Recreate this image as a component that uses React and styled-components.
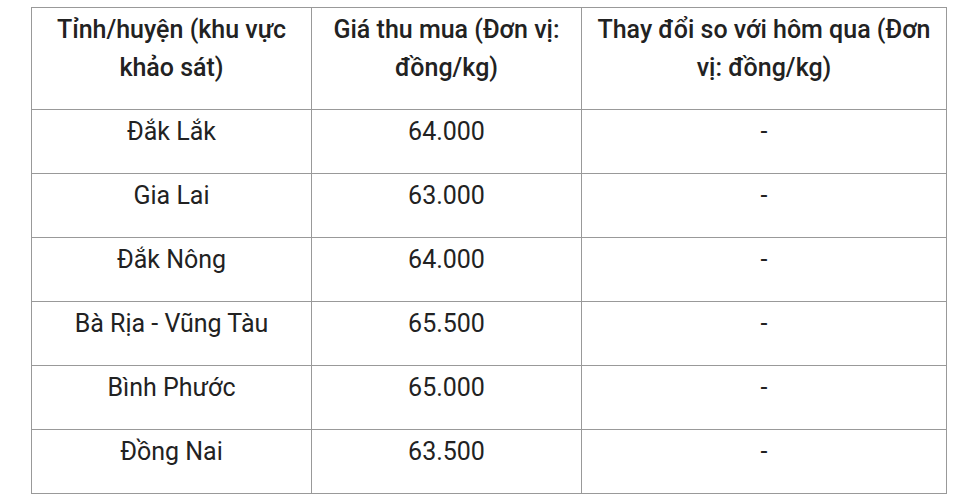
import React from "react";
import styled, { createGlobalStyle } from "styled-components";

const GlobalStyle = createGlobalStyle`
  body {
    margin: 0;
    background: #fff;
    font-family: Roboto, "Noto Sans", "Liberation Sans", sans-serif;
    color: #222;
  }
`;

const Wrapper = styled.div`
  padding: 7px 28px 0 31px;
`;

const Table = styled.table`
  width: 915px;
  border-collapse: collapse;
  table-layout: fixed;
  font-size: 25px;
  line-height: 38px;
`;

const Col = styled.col`
  width: ${(p) => p.$w}px;
`;

const HeadCell = styled.th`
  border: 1px solid #999;
  padding: 3px 8px 22px;
  font-weight: 500;
  text-align: center;
  vertical-align: top;
  height: 76px;
`;

const Cell = styled.td`
  border: 1px solid #999;
  padding: 3px 8px 22px;
  text-align: center;
  vertical-align: top;
  height: 38px;
`;

const rows = [
  ["Đắk Lắk", "64.000", "-"],
  ["Gia Lai", "63.000", "-"],
  ["Đắk Nông", "64.000", "-"],
  ["Bà Rịa - Vũng Tàu", "65.500", "-"],
  ["Bình Phước", "65.000", "-"],
  ["Đồng Nai", "63.500", "-"],
];

export default function App() {
  return (
    <>
      <GlobalStyle />
      <Wrapper>
        <Table>
          <colgroup>
            <Col $w={280} />
            <Col $w={270} />
            <Col $w={365} />
          </colgroup>
          <thead>
            <tr>
              <HeadCell>Tỉnh/huyện (khu vực khảo sát)</HeadCell>
              <HeadCell>Giá thu mua (Đơn vị: đồng/kg)</HeadCell>
              <HeadCell>Thay đổi so với hôm qua (Đơn vị: đồng/kg)</HeadCell>
            </tr>
          </thead>
          <tbody>
            {rows.map((r, i) => (
              <tr key={i}>
                {r.map((c, j) => (
                  <Cell key={j}>{c}</Cell>
                ))}
              </tr>
            ))}
          </tbody>
        </Table>
      </Wrapper>
    </>
  );
}
